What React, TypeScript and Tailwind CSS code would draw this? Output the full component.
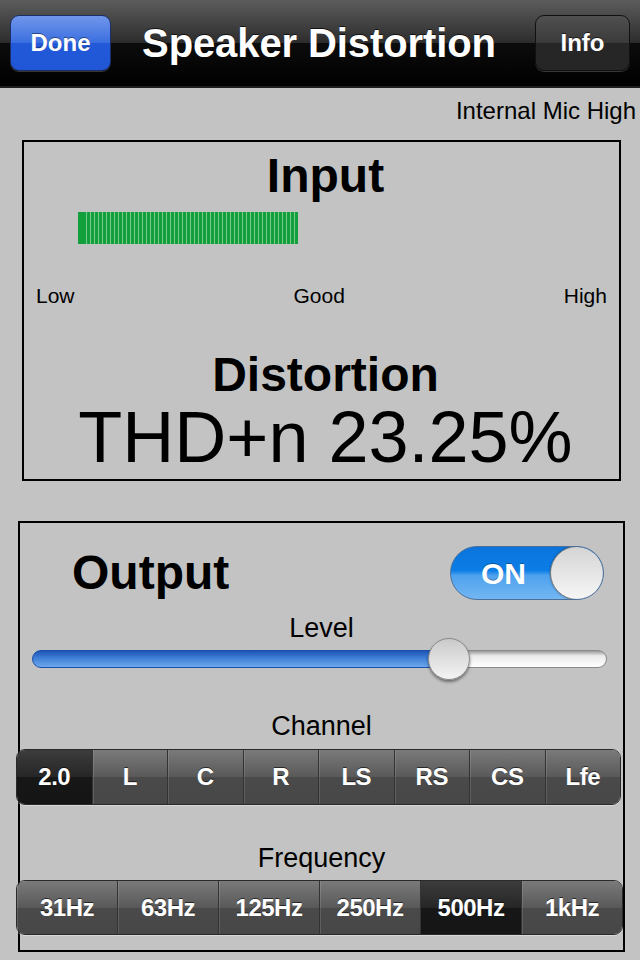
import React, { useState } from 'react'

const channels = ['2.0', 'L', 'C', 'R', 'LS', 'RS', 'CS', 'Lfe']
const freqs = ['31Hz', '63Hz', '125Hz', '250Hz', '500Hz', '1kHz']

const Segmented: React.FC<{ items: string[]; selected: number; onSelect: (i: number) => void; className: string }> = ({ items, selected, onSelect, className }) => (
  <div className={`flex overflow-hidden rounded-[9px] border border-[#2a2a2a] shadow-[0_1px_0_rgba(255,255,255,0.35)] ${className}`}>
    {items.map((it, i) => (
      <button
        key={it}
        onClick={() => onSelect(i)}
        className={`flex-1 flex items-center justify-center text-[24px] font-bold tracking-[-0.5px] text-white [text-shadow:0_-1px_0_rgba(0,0,0,0.6)] ${
          i > 0 ? 'border-l border-[#333]' : ''
        } ${
          i === selected
            ? 'bg-[linear-gradient(#3c3c3c,#262626_50%,#171717_50%,#151515)]'
            : 'bg-[linear-gradient(#7a7a7a,#595959_50%,#4a4a4a_50%,#474747)] shadow-[inset_1px_0_0_rgba(255,255,255,0.12)]'
        }`}
      >
        {it}
      </button>
    ))}
  </div>
)

const App: React.FC = () => {
  const [on, setOn] = useState(true)
  const [channel, setChannel] = useState(0)
  const [freq, setFreq] = useState(4)
  const level = 0.725

  return (
    <div className="w-[640px] h-[960px] overflow-hidden bg-[#c3c3c3] font-['Liberation_Sans',Arial,sans-serif] text-black">
      {/* nav bar */}
      <div className="h-[88px] flex items-center justify-between px-[10px] border-b-2 border-[#1e1e1e] bg-[linear-gradient(#5c5c5c,#2c2c2c_50%,#0c0c0c_50%,#000)]">
        <button className="w-[101px] h-[56px] rounded-[9px] border border-[#1b2f66] bg-[linear-gradient(#7096ea,#3a6ee0_50%,#2159d8_50%,#2157d6)] text-white text-[24px] font-bold shadow-[0_1px_0_rgba(255,255,255,0.2)] [text-shadow:0_-1px_0_rgba(0,0,0,0.45)]">
          Done
        </button>
        <h1 className="mr-[8px] text-white text-[40px] font-bold tracking-[-0.1px] [text-shadow:0_-1px_0_rgba(0,0,0,0.7)]">Speaker Distortion</h1>
        <button className="w-[95px] h-[56px] rounded-[9px] border border-[#111] bg-[linear-gradient(#505050,#3a3a3a_50%,#262626_50%,#262626)] text-white text-[24px] font-bold shadow-[0_1px_0_rgba(255,255,255,0.2)] [text-shadow:0_-1px_0_rgba(0,0,0,0.6)]">
          Info
        </button>
      </div>

      <div className="h-[52px] flex items-center justify-end pr-[4px] pb-[6px] text-[24px]">Internal Mic High</div>

      {/* input panel */}
      <div className="ml-[22px] w-[599px] h-[341px] border-2 border-black flex flex-col">
        <div className="h-[68px] pl-[8px] flex items-center justify-center text-[48px] font-bold">Input</div>
        <div className="mt-[2px] ml-[54px] h-[32px] w-[220px] flex">
          <div className="w-[8px] h-full bg-[#11a03c]" />
          <div className="flex-1 h-full bg-[repeating-linear-gradient(90deg,#78c990_0px,#78c990_1px,#11a03c_1px,#11a03c_4px)]" />
        </div>
        <div className="mt-[40px] h-[24px] flex items-center justify-between px-[12px] text-[21px]">
          <span>Low</span>
          <span>Good</span>
          <span>High</span>
        </div>
        <div className="mt-[43px] h-[48px] pl-[8px] flex items-center justify-center text-[48px] font-bold">Distortion</div>
        <div className="h-[76px] pl-[8px] flex items-center justify-center text-[72px]">THD+n 23.25%</div>
      </div>

      {/* output panel */}
      <div className="mt-[40px] ml-[18px] w-[607px] h-[431px] border-2 border-black flex flex-col px-[2px]">
        <div className="mt-[23px] h-[54px] flex items-center justify-between pl-[50px] pr-[17px]">
          <span className="text-[48px] font-bold">Output</span>
          <button
            onClick={() => setOn(!on)}
            className={`relative w-[154px] h-[54px] rounded-full border border-[#4a6f99] overflow-hidden ${
              on ? 'bg-[linear-gradient(#0a74dc,#0c7de6_45%,#4ea2ee_55%,#73b6f2)]' : 'bg-[linear-gradient(#dcdcdc,#fff)]'
            }`}
          >
            <span className="absolute left-[30px] top-0 h-full flex items-center text-white text-[30px] font-bold [text-shadow:0_-1px_0_rgba(0,0,0,0.3)]">ON</span>
            <span className="absolute right-[-1px] top-[-1px] w-[54px] h-[54px] rounded-full border border-[#7a7a7a] bg-[linear-gradient(#d4d4d4,#f6f6f6)] shadow-[0_0_2px_rgba(0,0,0,0.5)]" />
          </button>
        </div>

        <div className="mt-[14px] h-[28px] flex items-center justify-center text-[27px]">Level</div>

        <div className="relative mt-[8px] ml-[10px] w-[575px] h-[18px] flex">
          <div className="h-full rounded-l-full border border-[#1a4fa8] bg-[linear-gradient(#1d55b4,#3f7fd6_45%,#6ea8ec)]" style={{ width: `${level * 100}%` }} />
          <div className="flex-1 h-full rounded-r-full border border-[#8a8a8a] border-l-0 bg-[linear-gradient(#9a9a9a,#eaeaea_30%,#fff)]" />
          <div
            className="absolute top-[-12px] w-[42px] h-[42px] rounded-full border border-[#8a8a8a] bg-[linear-gradient(#cacaca,#f4f4f4)] shadow-[0_2px_3px_rgba(0,0,0,0.45)]"
            style={{ left: `calc(${level * 100}% - 21px)` }}
          />
        </div>

        <div className="mt-[44px] h-[28px] flex items-center justify-center text-[27px]">Channel</div>
        <Segmented items={channels} selected={channel} onSelect={setChannel} className="mt-[9px] -ml-[6px] w-[605px] h-[56px]" />

        <div className="mt-[39px] h-[28px] flex items-center justify-center text-[27px]">Frequency</div>
        <Segmented items={freqs} selected={freq} onSelect={setFreq} className="mt-[8px] -ml-[6px] w-[607px] h-[55px]" />
      </div>
    </div>
  )
}

export default App
